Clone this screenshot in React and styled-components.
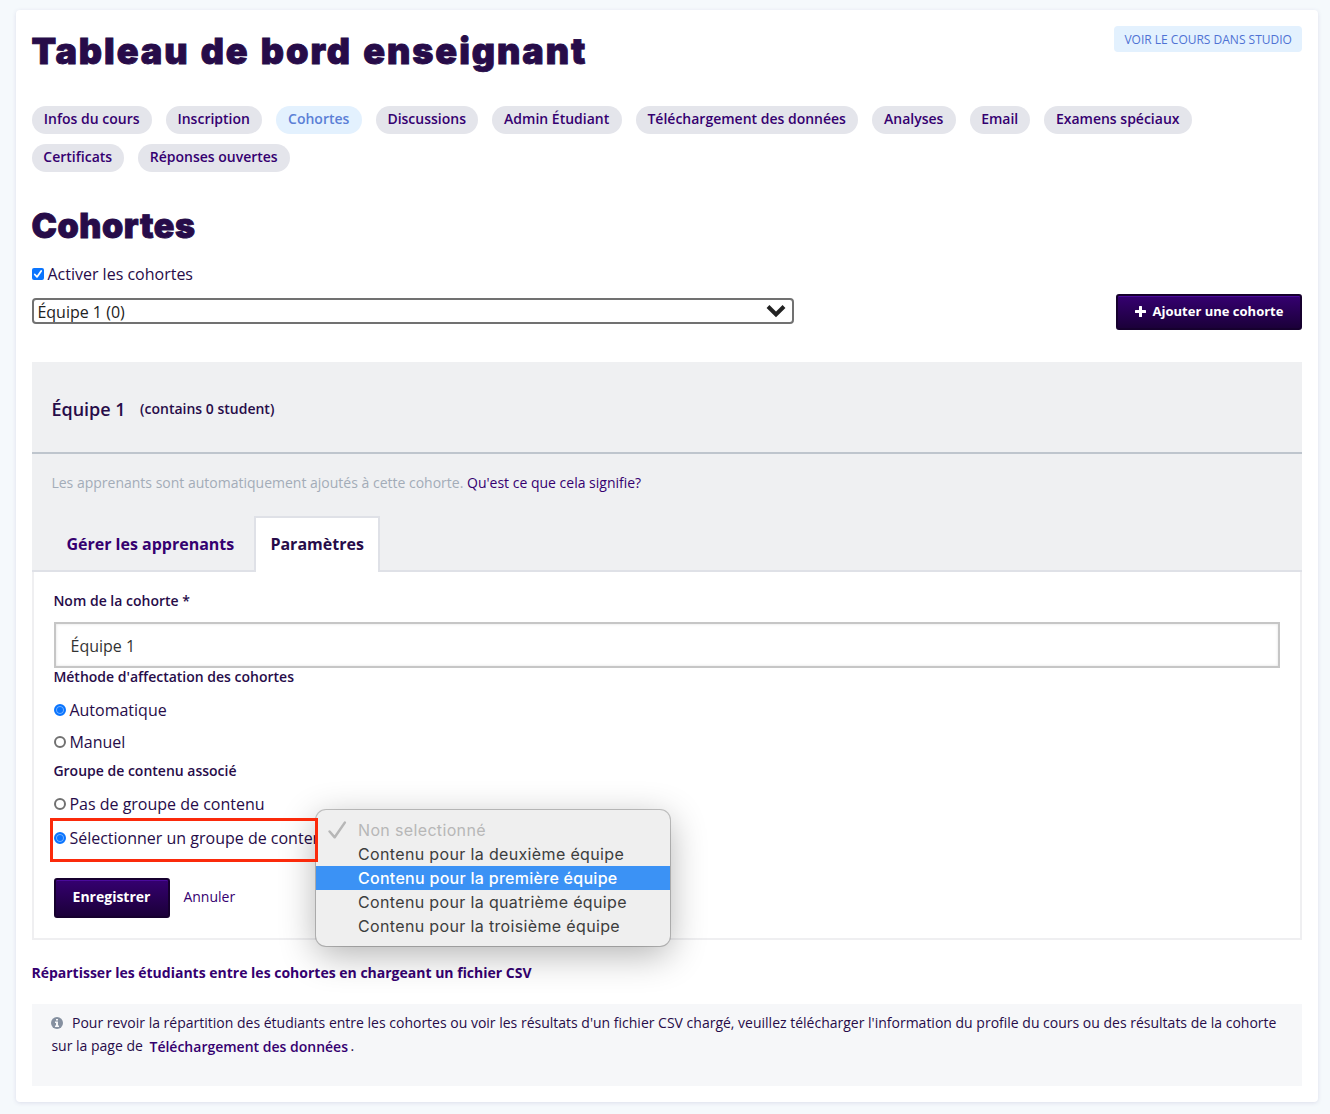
import React from 'react';
import styled, { createGlobalStyle } from 'styled-components';

const GlobalStyle = createGlobalStyle`
  *, *::before, *::after { box-sizing: border-box; }
  body {
    margin: 0;
    background: #f5f9fc;
    color: #270c49;
    font-family: "Open Sans", "Noto Sans", sans-serif;
    font-size: 16px;
    text-indent: -0.6px;
  }
  h1, h2, h3, p { margin: 0; }
  a { color: #350070; text-decoration: none; }
`;

const Page = styled.div`
  height: 1114px;
  padding: 10px 12px 12px 16px;
  overflow: hidden;
`;

const Card = styled.main`
  height: 1092px;
  padding: 0 16px;
  background: #fff;
  border-radius: 4px;
  box-shadow: 0 1px 4px rgba(60, 50, 120, 0.13);
`;

const Header = styled.header`
  display: flex;
  justify-content: space-between;
  height: 96px;
  padding-top: 16px;
`;

const Title = styled.h1`
  font: 900 ${(p) => p.$size}px/50px Inter, sans-serif;
  letter-spacing: ${(p) => p.$spacing};
  word-spacing: 2px;
  text-indent: -0.6px;
  -webkit-text-stroke: 0.9px #270c49;
  white-space: nowrap;
`;

const StudioLink = styled.a`
  width: 188px;
  height: 26px;
  padding-left: 11px;
  border-radius: 4px;
  background: #e3f1fe;
  color: #4f72d4;
  font-size: 12px;
  line-height: 27px;
  white-space: nowrap;
`;

const Nav = styled.nav`
  display: flex;
  flex-wrap: wrap;
  gap: 10px 14px;
  padding-right: 60px;
`;

const Pill = styled.a`
  width: ${(p) => p.$width}px;
  height: 28px;
  border-radius: 14px;
  background: ${(p) => (p.$active ? '#e3f1fe' : '#e4e5eb')};
  color: ${(p) => (p.$active ? '#5b7fd6' : '#350070')};
  font-size: 14px;
  font-weight: 600;
  line-height: 26px;
  text-align: center;
  white-space: nowrap;
`;

const SectionTitle = styled(Title).attrs({ as: 'h2' })`
  margin-top: 29px;
`;

const CheckRow = styled.label`
  display: flex;
  align-items: center;
  gap: 4px;
  height: 24px;
  margin-top: 11px;
`;

const CheckBox = styled.span`
  display: flex;
  width: 12px;
  height: 12px;
  border-radius: 2px;
  background: #0b75fe;
`;

const Toolbar = styled.div`
  display: flex;
  align-items: center;
  justify-content: space-between;
  height: 36px;
  margin-top: 8px;
`;

const Select = styled.div`
  display: flex;
  align-items: center;
  justify-content: space-between;
  width: 762px;
  height: 26px;
  margin-top: -2px;
  padding: 2px 6px 0 4px;
  border: 2px solid #717171;
  border-radius: 4px;
  color: #222;
  svg { margin-top: -3px; }
`;

const PrimaryButton = styled.button`
  display: flex;
  align-items: center;
  justify-content: center;
  gap: 7px;
  width: ${(p) => p.$width}px;
  height: ${(p) => p.$height}px;
  padding: 0 0 2px;
  border: 2px solid #16002e;
  border-radius: 3px;
  background: linear-gradient(#350070, #1b0039);
  box-shadow: inset 0 1px 0 #4a0a9c;
  color: #fff;
  font: 700 ${(p) => p.$size}px "Open Sans", sans-serif;
  white-space: nowrap;
`;

const Group = styled.section`
  margin-top: 32px;
  background: #eff0f2;
`;

const GroupHeader = styled.div`
  display: flex;
  align-items: center;
  gap: 15px;
  height: 92px;
  padding: 2px 20px 0;
  border-bottom: 2px solid #bec5cd;
  h3 { margin-top: 2px; font-size: 18px; font-weight: 600; }
  span { font-size: 14px; font-weight: 600; }
`;

const Status = styled.p`
  height: 62px;
  padding: 17px 20px 0;
  color: #a3acb8;
  font-size: 14px;
  line-height: 24px;
`;

const Tabs = styled.div`
  display: flex;
  height: 56px;
  padding-left: 20px;
  box-shadow: inset 0 -2px 0 #dfe1e7;
`;

const Tab = styled.a`
  width: ${(p) => p.$width}px;
  padding-left: 15px;
  border: ${(p) => (p.$active ? '2px solid #dfe1e7' : '0')};
  border-bottom: 0;
  background: ${(p) => (p.$active ? '#fff' : 'transparent')};
  color: ${(p) => (p.$active ? '#270c49' : '#350070')};
  font-weight: 700;
  line-height: ${(p) => (p.$active ? 52 : 56)}px;
  white-space: nowrap;
`;

const Form = styled.form`
  height: 368px;
  padding: 17px 20px 0;
  background: #fff;
  border: 2px solid #efeff1;
  border-top: 0;
`;

const FieldLabel = styled.div`
  height: ${(p) => p.$height}px;
  font-size: 14px;
  font-weight: 600;
  line-height: ${(p) => p.$line || 24}px;
`;

const Input = styled.input`
  display: block;
  width: 100%;
  height: 46px;
  padding: 2px 14px 0;
  border: 2px solid #c6c6c6;
  border-radius: 0;
  box-shadow: inset 0 0 3px rgba(0, 0, 0, 0.12);
  color: #333;
  font: 16px "Open Sans", sans-serif;
  text-indent: 0.5px;
`;

const RadioRow = styled.label`
  position: relative;
  display: flex;
  align-items: center;
  gap: 4px;
  height: ${(p) => p.$height}px;
  white-space: nowrap;
`;

const Dot = styled.span`
  width: 12px;
  height: 12px;
  border-radius: 50%;
  border: 2px solid ${(p) => (p.$on ? '#0b75fe' : '#717171')};
  background: ${(p) => (p.$on ? '#0b75fe' : '#fff')};
  box-shadow: ${(p) => (p.$on ? 'inset 0 0 0 1px #75b1ff' : 'none')};
`;

const Highlight = styled.div`
  position: absolute;
  left: -4px;
  top: -2px;
  z-index: 3;
  width: 268px;
  height: 44px;
  border: 3px solid #fb2a0b;
`;

const Menu = styled.div`
  position: absolute;
  left: 262px;
  top: -10px;
  z-index: 2;
  width: 354px;
  height: 136px;
  padding: 8px 0;
  border-radius: 10px;
  background: #efefef;
  box-shadow: 0 0 0 1px rgba(0, 0, 0, 0.22), 0 9px 36px rgba(0, 0, 0, 0.3);
`;

const MenuItem = styled.div`
  display: flex;
  align-items: center;
  height: 24px;
  padding-left: 12px;
  background: ${(p) => (p.$selected ? '#3b92f5' : 'transparent')};
  color: ${(p) => (p.$selected ? '#fff' : p.$disabled ? '#b7b7b7' : '#3d3d3d')};
  font: ${(p) => (p.$selected ? 500 : 400)} 16px Inter, sans-serif;
  letter-spacing: ${(p) => (p.$selected ? 0.28 : 0.35)}px;
  text-indent: 0;
`;

const MenuMark = styled.span`
  display: flex;
  width: 30px;
`;

const Actions = styled.div`
  display: flex;
  align-items: center;
  gap: 14px;
  height: 40px;
  margin-top: 22px;
  a { font-size: 14px; margin-top: -4px; }
  button { padding-bottom: 4px; padding-right: 1px; }
`;

const CsvLink = styled.a`
  display: block;
  height: 24px;
  margin-top: 21px;
  font-size: 14px;
  font-weight: 700;
  line-height: 24px;
`;

const Notice = styled.div`
  height: 82px;
  margin-top: 19px;
  padding: 7px 20px 0 19.4px;
  background: #f6f7f9;
  font-size: 14px;
  line-height: 23px;
  text-indent: 0;
  white-space: nowrap;
  a { margin: 0 -1px 0 3px; font-weight: 600; position: relative; top: 1px; }
  svg { margin-right: 8.600px; vertical-align: -1px; }
`;

const tabs = [
  ['Infos du cours', 120], ['Inscription', 96], ['Cohortes', 86], ['Discussions', 102],
  ['Admin Étudiant', 130], ['Téléchargement des données', 222], ['Analyses', 84],
  ['Email', 60], ['Examens spéciaux', 148], ['Certificats', 92], ['Réponses ouvertes', 152],
];

const options = [
  { text: 'Non selectionné', disabled: true },
  { text: 'Contenu pour la deuxième équipe' },
  { text: 'Contenu pour la première équipe', selected: true },
  { text: 'Contenu pour la quatrième équipe' },
  { text: 'Contenu pour la troisième équipe' },
];

export default function App() {
  return (
    <Page>
      <GlobalStyle />
      <Card>
        <Header>
          <Title $size={36} $spacing="1.95px">Tableau de bord enseignant</Title>
          <StudioLink>VOIR LE COURS DANS STUDIO</StudioLink>
        </Header>
        <Nav>
          {tabs.map(([name, width]) => (
            <Pill key={name} $width={width} $active={name === 'Cohortes'}>{name}</Pill>
          ))}
        </Nav>
        <SectionTitle $size={34} $spacing="0.6px">Cohortes</SectionTitle>
        <CheckRow>
          <CheckBox>
            <svg width="12" height="12" viewBox="0 0 12 12" fill="none" stroke="#fff" strokeWidth="1.8" strokeLinecap="round" strokeLinejoin="round">
              <path d="M2.8 6.5 5 8.9 9.2 2.9" />
            </svg>
          </CheckBox>
          Activer les cohortes
        </CheckRow>
        <Toolbar>
          <Select>
            Équipe 1 (0)
            <svg width="20" height="14" viewBox="0 0 20 14" fill="none" stroke="#222" strokeWidth="4">
              <path d="M2 2.5 10 10.5 18 2.5" />
            </svg>
          </Select>
          <PrimaryButton $width={186} $height={36} $size={13}>
            <svg width="11" height="11" viewBox="0 0 11 11" fill="#fff">
              <path d="M4.7 0h1.7q.6 0 .6.6V4h3.4q.6 0 .6.6v1.8q0 .6-.6.6H7v3.4q0 .6-.6.6H4.6q-.6 0-.6-.6V7H.6Q0 7 0 6.400V4.600Q0 4 .6 4H4V.6Q4 0 4.700 0Z" />
            </svg>
            Ajouter une cohorte
          </PrimaryButton>
        </Toolbar>
        <Group>
          <GroupHeader>
            <h3>Équipe 1</h3>
            <span>(contains 0 student)</span>
          </GroupHeader>
          <Status>
            Les apprenants sont automatiquement ajoutés à cette cohorte. <a>Qu'est ce que cela signifie?</a>
          </Status>
          <Tabs>
            <Tab $width={202}>Gérer les apprenants</Tab>
            <Tab $width={126} $active>Paramètres</Tab>
          </Tabs>
          <Form>
            <FieldLabel $height={33}>Nom de la cohorte *</FieldLabel>
            <Input defaultValue="Équipe 1" />
            <FieldLabel $height={26} $line={18}>Méthode d'affectation des cohortes</FieldLabel>
            <RadioRow $height={32}><Dot $on />Automatique</RadioRow>
            <RadioRow $height={32}><Dot />Manuel</RadioRow>
            <FieldLabel $height={30} $line={26}>Groupe de contenu associé</FieldLabel>
            <RadioRow $height={32}><Dot />Pas de groupe de contenu</RadioRow>
            <RadioRow $height={36}>
              <Dot $on />
              Sélectionner un groupe de contenu
              <Highlight />
              <Menu>
                {options.map((o) => (
                  <MenuItem key={o.text} $selected={o.selected} $disabled={o.disabled}>
                    <MenuMark>
                      {o.disabled && (
                        <svg width="19" height="18" viewBox="0 0 19 18" fill="none" stroke="#b7b7b7" strokeWidth="2.5" strokeLinecap="round" strokeLinejoin="round">
                          <path d="M1.600 10.500 6.700 16.300 16.800 1.600" />
                        </svg>
                      )}
                    </MenuMark>
                    {o.text}
                  </MenuItem>
                ))}
              </Menu>
            </RadioRow>
            <Actions>
              <PrimaryButton type="button" $width={116} $height={40} $size={14}>Enregistrer</PrimaryButton>
              <a>Annuler</a>
            </Actions>
          </Form>
        </Group>
        <CsvLink>Répartisser les étudiants entre les cohortes en chargeant un fichier CSV</CsvLink>
        <Notice>
          <svg width="12" height="12" viewBox="0 0 12 12">
            <circle cx="6" cy="6" r="6" fill="#8590a0" />
            <path d="M5 1.900h2v1.600H5zM4 4.600h3v3.900h1V10H4V8.500h1V6H4z" fill="#f6f7f9" />
          </svg>
          Pour revoir la répartition des étudiants entre les cohortes ou voir les résultats d'un fichier CSV chargé, veuillez télécharger l'information du profile du cours ou des résultats de la cohorte
          <br />
          sur la page de <a>Téléchargement des données</a> .
        </Notice>
      </Card>
    </Page>
  );
}
